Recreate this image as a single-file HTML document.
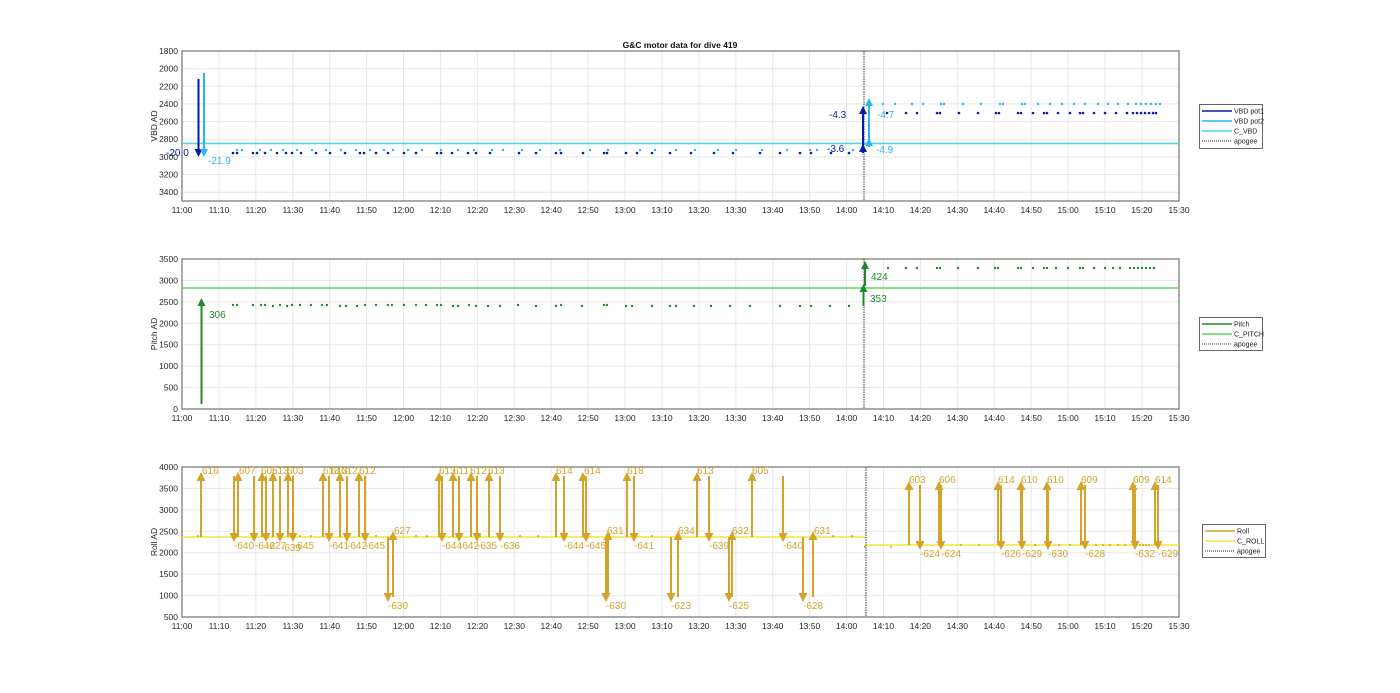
<!DOCTYPE html>
<html><head><meta charset="utf-8"><style>
html,body{margin:0;padding:0;background:#fff;}
svg{display:block;font-family:"Liberation Sans",sans-serif;}
.g{stroke:#e8e8e8;stroke-width:1;}
.ax{fill:none;stroke:#555;stroke-width:1;}
.tk{font-size:8.5px;fill:#262626;}
</style></head><body>
<svg width="1400" height="693" viewBox="0 0 1400 693" xmlns="http://www.w3.org/2000/svg">
<defs>
<marker id="hb" markerWidth="8" markerHeight="8" refX="6" refY="4" orient="auto" markerUnits="userSpaceOnUse" viewBox="0 0 8 8"><path d="M0,0 L8,4 L0,8z" fill="#0a1aa8"/></marker>
<marker id="hl" markerWidth="8" markerHeight="8" refX="6" refY="4" orient="auto" markerUnits="userSpaceOnUse" viewBox="0 0 8 8"><path d="M0,0 L8,4 L0,8z" fill="#2bb5ee"/></marker>
<marker id="hg" markerWidth="8" markerHeight="8" refX="6" refY="4" orient="auto" markerUnits="userSpaceOnUse" viewBox="0 0 8 8"><path d="M0,0 L8,4 L0,8z" fill="#1e8a2c"/></marker>
<marker id="hy" markerWidth="9" markerHeight="9" refX="7" refY="4.5" orient="auto" markerUnits="userSpaceOnUse" viewBox="0 0 9 9"><path d="M0,0 L9,4.5 L0,9z" fill="#d4a42a"/></marker>
</defs>

<text x="680" y="48" font-size="8.5" font-weight="bold" text-anchor="middle" fill="#111">G&amp;C motor data for dive 419</text>

<!-- ============ PANEL 1 ============ -->
<g class="g">
<path d="M218.9,51V201M255.8,51V201M292.8,51V201M329.7,51V201M366.6,51V201M403.5,51V201M440.4,51V201M477.4,51V201M514.3,51V201M551.2,51V201M588.1,51V201M625,51V201M662,51V201M698.9,51V201M735.8,51V201M772.7,51V201M809.6,51V201M846.6,51V201M883.5,51V201M920.4,51V201M957.3,51V201M994.2,51V201M1031.2,51V201M1068.1,51V201M1105,51V201M1141.9,51V201"/>
<path d="M182,68.6H1179M182,86.3H1179M182,103.9H1179M182,121.6H1179M182,139.2H1179M182,156.9H1179M182,174.5H1179M182,192.2H1179"/>
</g>
<rect class="ax" x="182" y="51" width="997" height="150"/>
<g class="tk" text-anchor="end">
<text x="178" y="54">1800</text><text x="178" y="71.6">2000</text><text x="178" y="89.3">2200</text><text x="178" y="106.9">2400</text><text x="178" y="124.6">2600</text><text x="178" y="142.2">2800</text><text x="178" y="159.9">3000</text><text x="178" y="177.5">3200</text><text x="178" y="195.2">3400</text>
</g>
<text transform="translate(157,126) rotate(-90)" font-size="8.5" text-anchor="middle" fill="#262626">VBD AD</text>
<g class="tk" text-anchor="middle">
<text x="182" y="213">11:00</text><text x="218.9" y="213">11:10</text><text x="255.8" y="213">11:20</text><text x="292.8" y="213">11:30</text><text x="329.7" y="213">11:40</text><text x="366.6" y="213">11:50</text><text x="403.5" y="213">12:00</text><text x="440.4" y="213">12:10</text><text x="477.4" y="213">12:20</text><text x="514.3" y="213">12:30</text><text x="551.2" y="213">12:40</text><text x="588.1" y="213">12:50</text><text x="625" y="213">13:00</text><text x="662" y="213">13:10</text><text x="698.9" y="213">13:20</text><text x="735.8" y="213">13:30</text><text x="772.7" y="213">13:40</text><text x="809.6" y="213">13:50</text><text x="846.6" y="213">14:00</text><text x="883.5" y="213">14:10</text><text x="920.4" y="213">14:20</text><text x="957.3" y="213">14:30</text><text x="994.2" y="213">14:40</text><text x="1031.2" y="213">14:50</text><text x="1068.1" y="213">15:00</text><text x="1105" y="213">15:10</text><text x="1141.9" y="213">15:20</text><text x="1179" y="213">15:30</text>
</g>
<line x1="182" y1="143.5" x2="1179" y2="143.5" stroke="#3fd8ea" stroke-width="1.5"/>
<line x1="864" y1="51" x2="864" y2="201" stroke="#333" stroke-width="1" stroke-dasharray="1.5,1"/>
<g fill="#2bb5ee">
<circle cx="237" cy="150" r="1.2"/><circle cx="242" cy="150" r="1.2"/><circle cx="260" cy="150" r="1.2"/><circle cx="271" cy="150" r="1.2"/><circle cx="283" cy="150" r="1.2"/><circle cx="297" cy="150" r="1.2"/><circle cx="312" cy="150" r="1.2"/><circle cx="326" cy="150" r="1.2"/><circle cx="341" cy="150" r="1.2"/><circle cx="356" cy="150" r="1.2"/><circle cx="370" cy="150" r="1.2"/><circle cx="384" cy="150" r="1.2"/><circle cx="393" cy="150" r="1.2"/><circle cx="408" cy="150" r="1.2"/><circle cx="422" cy="150" r="1.2"/><circle cx="441" cy="150" r="1.2"/><circle cx="458" cy="150" r="1.2"/><circle cx="474" cy="150" r="1.2"/><circle cx="492" cy="150" r="1.2"/><circle cx="503" cy="150" r="1.2"/><circle cx="522" cy="150" r="1.2"/><circle cx="540" cy="150" r="1.2"/><circle cx="560" cy="150" r="1.2"/><circle cx="590" cy="150" r="1.2"/><circle cx="608" cy="150" r="1.2"/><circle cx="640" cy="150" r="1.2"/><circle cx="655" cy="150" r="1.2"/><circle cx="676" cy="150" r="1.2"/><circle cx="695" cy="150" r="1.2"/><circle cx="718" cy="150" r="1.2"/><circle cx="736" cy="150" r="1.2"/><circle cx="762" cy="150" r="1.2"/><circle cx="787" cy="150" r="1.2"/><circle cx="810" cy="150" r="1.2"/><circle cx="817" cy="150" r="1.2"/><circle cx="853" cy="150" r="1.2"/>
<circle cx="883" cy="104" r="1.2"/><circle cx="895" cy="104" r="1.2"/><circle cx="912" cy="104" r="1.2"/><circle cx="923" cy="104" r="1.2"/><circle cx="941" cy="104" r="1.2"/><circle cx="944" cy="104" r="1.2"/><circle cx="963" cy="104" r="1.2"/><circle cx="981" cy="104" r="1.2"/><circle cx="1000" cy="104" r="1.2"/><circle cx="1003" cy="104" r="1.2"/><circle cx="1022" cy="104" r="1.2"/><circle cx="1025" cy="104" r="1.2"/><circle cx="1038" cy="104" r="1.2"/><circle cx="1050" cy="104" r="1.2"/><circle cx="1062" cy="104" r="1.2"/><circle cx="1074" cy="104" r="1.2"/><circle cx="1085" cy="104" r="1.2"/><circle cx="1098" cy="104" r="1.2"/><circle cx="1108" cy="104" r="1.2"/><circle cx="1118" cy="104" r="1.2"/><circle cx="1128" cy="104" r="1.2"/><circle cx="1136" cy="104" r="1.2"/><circle cx="1141" cy="104" r="1.2"/><circle cx="1146" cy="104" r="1.2"/><circle cx="1151" cy="104" r="1.2"/><circle cx="1156" cy="104" r="1.2"/><circle cx="1160" cy="104" r="1.2"/>
</g>
<g fill="#0a1aa8">
<circle cx="233" cy="153" r="1.3"/><circle cx="237" cy="153" r="1.3"/><circle cx="253" cy="153" r="1.3"/><circle cx="257" cy="153" r="1.3"/><circle cx="265" cy="153" r="1.3"/><circle cx="277" cy="153" r="1.3"/><circle cx="286" cy="153" r="1.3"/><circle cx="292" cy="153" r="1.3"/><circle cx="301" cy="153" r="1.3"/><circle cx="316" cy="153" r="1.3"/><circle cx="330" cy="153" r="1.3"/><circle cx="345" cy="153" r="1.3"/><circle cx="360" cy="153" r="1.3"/><circle cx="364" cy="153" r="1.3"/><circle cx="376" cy="153" r="1.3"/><circle cx="388" cy="153" r="1.3"/><circle cx="404" cy="153" r="1.3"/><circle cx="416" cy="153" r="1.3"/><circle cx="437" cy="153" r="1.3"/><circle cx="441" cy="153" r="1.3"/><circle cx="452" cy="153" r="1.3"/><circle cx="468" cy="153" r="1.3"/><circle cx="476" cy="153" r="1.3"/><circle cx="490" cy="153" r="1.3"/><circle cx="519" cy="153" r="1.3"/><circle cx="536" cy="153" r="1.3"/><circle cx="556" cy="153" r="1.3"/><circle cx="561" cy="153" r="1.3"/><circle cx="583" cy="153" r="1.3"/><circle cx="604" cy="153" r="1.3"/><circle cx="607" cy="153" r="1.3"/><circle cx="626" cy="153" r="1.3"/><circle cx="637" cy="153" r="1.3"/><circle cx="652" cy="153" r="1.3"/><circle cx="670" cy="153" r="1.3"/><circle cx="691" cy="153" r="1.3"/><circle cx="714" cy="153" r="1.3"/><circle cx="733" cy="153" r="1.3"/><circle cx="760" cy="153" r="1.3"/><circle cx="780" cy="153" r="1.3"/><circle cx="800" cy="153" r="1.3"/><circle cx="811" cy="153" r="1.3"/><circle cx="831" cy="153" r="1.3"/><circle cx="849" cy="153" r="1.3"/>
<circle cx="887" cy="113" r="1.3"/><circle cx="906" cy="113" r="1.3"/><circle cx="917" cy="113" r="1.3"/><circle cx="937" cy="113" r="1.3"/><circle cx="940" cy="113" r="1.3"/><circle cx="959" cy="113" r="1.3"/><circle cx="978" cy="113" r="1.3"/><circle cx="996" cy="113" r="1.3"/><circle cx="999" cy="113" r="1.3"/><circle cx="1018" cy="113" r="1.3"/><circle cx="1021" cy="113" r="1.3"/><circle cx="1033" cy="113" r="1.3"/><circle cx="1044" cy="113" r="1.3"/><circle cx="1047" cy="113" r="1.3"/><circle cx="1058" cy="113" r="1.3"/><circle cx="1070" cy="113" r="1.3"/><circle cx="1080" cy="113" r="1.3"/><circle cx="1083" cy="113" r="1.3"/><circle cx="1094" cy="113" r="1.3"/><circle cx="1105" cy="113" r="1.3"/><circle cx="1116" cy="113" r="1.3"/><circle cx="1127" cy="113" r="1.3"/><circle cx="1133" cy="113" r="1.3"/><circle cx="1137" cy="113" r="1.3"/><circle cx="1141" cy="113" r="1.3"/><circle cx="1145" cy="113" r="1.3"/><circle cx="1149" cy="113" r="1.3"/><circle cx="1153" cy="113" r="1.3"/><circle cx="1156" cy="113" r="1.3"/>
</g>
<line x1="198.5" y1="79" x2="198.5" y2="155" stroke="#0a1aa8" stroke-width="2" marker-end="url(#hb)"/>
<line x1="204" y1="73" x2="204" y2="155" stroke="#2bb5ee" stroke-width="2" marker-end="url(#hl)"/>
<text x="166" y="156" font-size="10" fill="#0a1aa8">-20.0</text>
<text x="208" y="164" font-size="10" fill="#2bb5ee">-21.9</text>
<line x1="863" y1="153" x2="863" y2="146" stroke="#0a1aa8" stroke-width="2" marker-end="url(#hb)"/>
<line x1="863" y1="146" x2="863" y2="108" stroke="#0a1aa8" stroke-width="2" marker-end="url(#hb)"/>
<line x1="869" y1="147" x2="869" y2="140" stroke="#2bb5ee" stroke-width="2" marker-end="url(#hl)"/>
<line x1="869" y1="140" x2="869" y2="100" stroke="#2bb5ee" stroke-width="2" marker-end="url(#hl)"/>
<text x="829" y="118" font-size="10" fill="#0a1aa8">-4.3</text>
<text x="827" y="152" font-size="10" fill="#0a1aa8">-3.6</text>
<text x="877" y="118" font-size="10" fill="#2bb5ee">-4.7</text>
<text x="876" y="153" font-size="10" fill="#2bb5ee">-4.9</text>
<rect x="1199.5" y="104.5" width="63" height="44" fill="#fff" stroke="#666"/>
<line x1="1202" y1="111" x2="1232" y2="111" stroke="#0a1aa8" stroke-width="1.5"/>
<line x1="1202" y1="121" x2="1232" y2="121" stroke="#2bb5ee" stroke-width="1.5"/>
<line x1="1202" y1="131" x2="1232" y2="131" stroke="#3fd8ea" stroke-width="1.5"/>
<line x1="1202" y1="141" x2="1232" y2="141" stroke="#333" stroke-dasharray="1,1"/>
<g font-size="7" fill="#222"><text x="1234" y="113.5">VBD pot1</text><text x="1234" y="123.5">VBD pot2</text><text x="1234" y="133.5">C_VBD</text><text x="1234" y="143.5">apogee</text></g>

<!-- ============ PANEL 2 ============ -->
<g class="g">
<path d="M218.9,259V409M255.8,259V409M292.8,259V409M329.7,259V409M366.6,259V409M403.5,259V409M440.4,259V409M477.4,259V409M514.3,259V409M551.2,259V409M588.1,259V409M625,259V409M662,259V409M698.9,259V409M735.8,259V409M772.7,259V409M809.6,259V409M846.6,259V409M883.5,259V409M920.4,259V409M957.3,259V409M994.2,259V409M1031.2,259V409M1068.1,259V409M1105,259V409M1141.9,259V409"/>
<path d="M182,280.4H1179M182,301.9H1179M182,323.3H1179M182,344.7H1179M182,366.1H1179M182,387.6H1179"/>
</g>
<rect class="ax" x="182" y="259" width="997" height="150"/>
<g class="tk" text-anchor="end">
<text x="178" y="262">3500</text><text x="178" y="283.4">3000</text><text x="178" y="304.9">2500</text><text x="178" y="326.3">2000</text><text x="178" y="347.7">1500</text><text x="178" y="369.1">1000</text><text x="178" y="390.6">500</text><text x="178" y="412">0</text>
</g>
<text transform="translate(157,334) rotate(-90)" font-size="8.5" text-anchor="middle" fill="#262626">Pitch AD</text>
<g class="tk" text-anchor="middle">
<text x="182" y="421">11:00</text><text x="218.9" y="421">11:10</text><text x="255.8" y="421">11:20</text><text x="292.8" y="421">11:30</text><text x="329.7" y="421">11:40</text><text x="366.6" y="421">11:50</text><text x="403.5" y="421">12:00</text><text x="440.4" y="421">12:10</text><text x="477.4" y="421">12:20</text><text x="514.3" y="421">12:30</text><text x="551.2" y="421">12:40</text><text x="588.1" y="421">12:50</text><text x="625" y="421">13:00</text><text x="662" y="421">13:10</text><text x="698.9" y="421">13:20</text><text x="735.8" y="421">13:30</text><text x="772.7" y="421">13:40</text><text x="809.6" y="421">13:50</text><text x="846.6" y="421">14:00</text><text x="883.5" y="421">14:10</text><text x="920.4" y="421">14:20</text><text x="957.3" y="421">14:30</text><text x="994.2" y="421">14:40</text><text x="1031.2" y="421">14:50</text><text x="1068.1" y="421">15:00</text><text x="1105" y="421">15:10</text><text x="1141.9" y="421">15:20</text><text x="1179" y="421">15:30</text>
</g>
<line x1="182" y1="288" x2="1179" y2="288" stroke="#5fd35f" stroke-width="1.5"/>
<line x1="864" y1="259" x2="864" y2="409" stroke="#333" stroke-width="1" stroke-dasharray="1.5,1"/>
<g fill="#1e8a2c">
<circle cx="233" cy="305" r="1.2"/><circle cx="237" cy="305" r="1.2"/><circle cx="253" cy="305" r="1.2"/><circle cx="261" cy="305" r="1.2"/><circle cx="265" cy="305" r="1.2"/><circle cx="273" cy="306" r="1.2"/><circle cx="280" cy="305" r="1.2"/><circle cx="287" cy="306" r="1.2"/><circle cx="292" cy="305" r="1.2"/><circle cx="300" cy="305" r="1.2"/><circle cx="311" cy="305" r="1.2"/><circle cx="322" cy="305" r="1.2"/><circle cx="327" cy="305" r="1.2"/><circle cx="340" cy="306" r="1.2"/><circle cx="346" cy="306" r="1.2"/><circle cx="357" cy="306" r="1.2"/><circle cx="365" cy="305" r="1.2"/><circle cx="376" cy="305" r="1.2"/><circle cx="388" cy="305" r="1.2"/><circle cx="392" cy="305" r="1.2"/><circle cx="404" cy="305" r="1.2"/><circle cx="416" cy="305" r="1.2"/><circle cx="426" cy="305" r="1.2"/><circle cx="437" cy="305" r="1.2"/><circle cx="441" cy="305" r="1.2"/><circle cx="453" cy="306" r="1.2"/><circle cx="458" cy="306" r="1.2"/><circle cx="469" cy="305" r="1.2"/><circle cx="476" cy="306" r="1.2"/><circle cx="488" cy="306" r="1.2"/><circle cx="500" cy="306" r="1.2"/><circle cx="518" cy="305" r="1.2"/><circle cx="536" cy="306" r="1.2"/><circle cx="556" cy="306" r="1.2"/><circle cx="561" cy="305" r="1.2"/><circle cx="582" cy="306" r="1.2"/><circle cx="604" cy="305" r="1.2"/><circle cx="607" cy="305" r="1.2"/><circle cx="626" cy="306" r="1.2"/><circle cx="632" cy="306" r="1.2"/><circle cx="652" cy="306" r="1.2"/><circle cx="670" cy="306" r="1.2"/><circle cx="676" cy="306" r="1.2"/><circle cx="694" cy="306" r="1.2"/><circle cx="711" cy="306" r="1.2"/><circle cx="730" cy="306" r="1.2"/><circle cx="750" cy="306" r="1.2"/><circle cx="780" cy="306" r="1.2"/><circle cx="800" cy="306" r="1.2"/><circle cx="811" cy="306" r="1.2"/><circle cx="830" cy="306" r="1.2"/><circle cx="849" cy="306" r="1.2"/>
<circle cx="888" cy="268" r="1.2"/><circle cx="906" cy="268" r="1.2"/><circle cx="917" cy="268" r="1.2"/><circle cx="937" cy="268" r="1.2"/><circle cx="940" cy="268" r="1.2"/><circle cx="958" cy="268" r="1.2"/><circle cx="978" cy="268" r="1.2"/><circle cx="995" cy="268" r="1.2"/><circle cx="998" cy="268" r="1.2"/><circle cx="1018" cy="268" r="1.2"/><circle cx="1021" cy="268" r="1.2"/><circle cx="1033" cy="268" r="1.2"/><circle cx="1044" cy="268" r="1.2"/><circle cx="1047" cy="268" r="1.2"/><circle cx="1056" cy="268" r="1.2"/><circle cx="1068" cy="268" r="1.2"/><circle cx="1080" cy="268" r="1.2"/><circle cx="1083" cy="268" r="1.2"/><circle cx="1094" cy="268" r="1.2"/><circle cx="1105" cy="268" r="1.2"/><circle cx="1113" cy="268" r="1.2"/><circle cx="1120" cy="268" r="1.2"/><circle cx="1130" cy="268" r="1.2"/><circle cx="1134" cy="268" r="1.2"/><circle cx="1138" cy="268" r="1.2"/><circle cx="1142" cy="268" r="1.2"/><circle cx="1146" cy="268" r="1.2"/><circle cx="1150" cy="268" r="1.2"/><circle cx="1154" cy="268" r="1.2"/>
</g>
<line x1="201.5" y1="404" x2="201.5" y2="300" stroke="#1e8a2c" stroke-width="2" marker-end="url(#hg)"/>
<text x="209" y="318" font-size="10" fill="#1e8a2c">306</text>
<line x1="863.5" y1="306" x2="863.5" y2="286" stroke="#1e8a2c" stroke-width="2" marker-end="url(#hg)"/>
<line x1="865" y1="286" x2="865" y2="263" stroke="#1e8a2c" stroke-width="2" marker-end="url(#hg)"/>
<text x="871" y="280" font-size="10" fill="#1e8a2c">424</text>
<text x="870" y="302" font-size="10" fill="#1e8a2c">353</text>
<rect x="1199.5" y="317.5" width="63" height="33" fill="#fff" stroke="#666"/>
<line x1="1202" y1="324" x2="1232" y2="324" stroke="#1e8a2c" stroke-width="1.5"/>
<line x1="1202" y1="334" x2="1232" y2="334" stroke="#5fd35f" stroke-width="1.5"/>
<line x1="1202" y1="344" x2="1232" y2="344" stroke="#333" stroke-dasharray="1,1"/>
<g font-size="7" fill="#222"><text x="1234" y="326.5">Pitch</text><text x="1234" y="336.5">C_PITCH</text><text x="1234" y="346.5">apogee</text></g>

<!-- ============ PANEL 3 ============ -->
<g class="g">
<path d="M218.9,467V617M255.8,467V617M292.8,467V617M329.7,467V617M366.6,467V617M403.5,467V617M440.4,467V617M477.4,467V617M514.3,467V617M551.2,467V617M588.1,467V617M625,467V617M662,467V617M698.9,467V617M735.8,467V617M772.7,467V617M809.6,467V617M846.6,467V617M883.5,467V617M920.4,467V617M957.3,467V617M994.2,467V617M1031.2,467V617M1068.1,467V617M1105,467V617M1141.9,467V617"/>
<path d="M182,488.4H1179M182,509.9H1179M182,531.3H1179M182,552.7H1179M182,574.1H1179M182,595.6H1179"/>
</g>
<rect class="ax" x="182" y="467" width="997" height="150"/>
<g class="tk" text-anchor="end">
<text x="178" y="470">4000</text><text x="178" y="491.4">3500</text><text x="178" y="512.9">3000</text><text x="178" y="534.3">2500</text><text x="178" y="555.7">2000</text><text x="178" y="577.1">1500</text><text x="178" y="598.6">1000</text><text x="178" y="620">500</text>
</g>
<text transform="translate(157,542) rotate(-90)" font-size="8.5" text-anchor="middle" fill="#262626">Roll AD</text>
<g class="tk" text-anchor="middle">
<text x="182" y="629">11:00</text><text x="218.9" y="629">11:10</text><text x="255.8" y="629">11:20</text><text x="292.8" y="629">11:30</text><text x="329.7" y="629">11:40</text><text x="366.6" y="629">11:50</text><text x="403.5" y="629">12:00</text><text x="440.4" y="629">12:10</text><text x="477.4" y="629">12:20</text><text x="514.3" y="629">12:30</text><text x="551.2" y="629">12:40</text><text x="588.1" y="629">12:50</text><text x="625" y="629">13:00</text><text x="662" y="629">13:10</text><text x="698.9" y="629">13:20</text><text x="735.8" y="629">13:30</text><text x="772.7" y="629">13:40</text><text x="809.6" y="629">13:50</text><text x="846.6" y="629">14:00</text><text x="883.5" y="629">14:10</text><text x="920.4" y="629">14:20</text><text x="957.3" y="629">14:30</text><text x="994.2" y="629">14:40</text><text x="1031.2" y="629">14:50</text><text x="1068.1" y="629">15:00</text><text x="1105" y="629">15:10</text><text x="1141.9" y="629">15:20</text><text x="1179" y="629">15:30</text>
</g>
<line x1="182" y1="537" x2="866" y2="537" stroke="#f2e63a" stroke-width="1.5"/>
<line x1="866" y1="545" x2="1179" y2="545" stroke="#f2e63a" stroke-width="1.5"/>
<line x1="866" y1="467" x2="866" y2="617" stroke="#333" stroke-width="1" stroke-dasharray="1.5,1"/>
<g fill="#d4a42a">
<circle cx="198" cy="536" r="1"/><circle cx="300" cy="536" r="1"/><circle cx="311" cy="536" r="1"/><circle cx="376" cy="536" r="1"/><circle cx="416" cy="536" r="1"/><circle cx="427" cy="536" r="1"/><circle cx="480" cy="536" r="1"/><circle cx="520" cy="536" r="1"/><circle cx="538" cy="536" r="1"/><circle cx="652" cy="536" r="1"/><circle cx="833" cy="536" r="1"/><circle cx="852" cy="536" r="1"/><circle cx="865" cy="547" r="1.2"/><circle cx="891" cy="547" r="1"/><circle cx="961" cy="545" r="1"/><circle cx="979" cy="545" r="1"/><circle cx="1035" cy="545" r="1"/><circle cx="1059" cy="545" r="1"/><circle cx="1070" cy="545" r="1"/><circle cx="1096" cy="545" r="1"/><circle cx="1103" cy="545" r="1"/><circle cx="1110" cy="545" r="1"/><circle cx="1118" cy="545" r="1"/><circle cx="1125" cy="545" r="1"/><circle cx="1140" cy="545" r="1"/><circle cx="1143" cy="545" r="1"/><circle cx="1146" cy="545" r="1"/><circle cx="1149" cy="545" r="1"/>
</g>
<g stroke="#d4a42a" stroke-width="2" marker-end="url(#hy)">
<line x1="201" y1="537" x2="201" y2="474"/><line x1="238" y1="537" x2="238" y2="474"/><line x1="262" y1="537" x2="262" y2="474"/><line x1="273" y1="537" x2="273" y2="474"/><line x1="288" y1="537" x2="288" y2="474"/>
<line x1="323" y1="537" x2="323" y2="474"/><line x1="340" y1="537" x2="340" y2="474"/><line x1="359" y1="537" x2="359" y2="474"/>
<line x1="393" y1="597" x2="393" y2="533"/>
<line x1="439" y1="537" x2="439" y2="474"/><line x1="453" y1="537" x2="453" y2="474"/><line x1="471" y1="537" x2="471" y2="474"/><line x1="489" y1="537" x2="489" y2="474"/>
<line x1="556" y1="537" x2="556" y2="474"/><line x1="583" y1="537" x2="583" y2="474"/><line x1="608" y1="597" x2="608" y2="533"/><line x1="627" y1="537" x2="627" y2="474"/>
<line x1="678" y1="597" x2="678" y2="533"/><line x1="697" y1="537" x2="697" y2="474"/><line x1="732" y1="597" x2="732" y2="533"/><line x1="752" y1="537" x2="752" y2="474"/><line x1="813" y1="597" x2="813" y2="533"/>
<line x1="909" y1="545" x2="909" y2="483"/><line x1="939" y1="545" x2="939" y2="483"/><line x1="998" y1="545" x2="998" y2="483"/><line x1="1021" y1="545" x2="1021" y2="483"/><line x1="1047" y1="545" x2="1047" y2="483"/><line x1="1081" y1="545" x2="1081" y2="483"/><line x1="1133" y1="545" x2="1133" y2="483"/><line x1="1155" y1="545" x2="1155" y2="483"/>
<line x1="234" y1="476" x2="234" y2="540"/><line x1="254" y1="476" x2="254" y2="540"/><line x1="266" y1="476" x2="266" y2="540"/><line x1="280" y1="476" x2="280" y2="540"/><line x1="293" y1="476" x2="293" y2="540"/>
<line x1="329" y1="476" x2="329" y2="540"/><line x1="347" y1="476" x2="347" y2="540"/><line x1="365" y1="476" x2="365" y2="540"/>
<line x1="388" y1="537" x2="388" y2="600"/>
<line x1="442" y1="476" x2="442" y2="540"/><line x1="459" y1="476" x2="459" y2="540"/><line x1="477" y1="476" x2="477" y2="540"/><line x1="500" y1="476" x2="500" y2="540"/>
<line x1="564" y1="476" x2="564" y2="540"/><line x1="586" y1="476" x2="586" y2="540"/><line x1="606" y1="537" x2="606" y2="600"/><line x1="634" y1="476" x2="634" y2="540"/>
<line x1="671" y1="537" x2="671" y2="600"/><line x1="709" y1="476" x2="709" y2="540"/><line x1="729" y1="537" x2="729" y2="600"/><line x1="783" y1="476" x2="783" y2="540"/><line x1="803" y1="537" x2="803" y2="600"/>
<line x1="920" y1="485" x2="920" y2="548"/><line x1="941" y1="485" x2="941" y2="548"/><line x1="1001" y1="485" x2="1001" y2="548"/><line x1="1022" y1="485" x2="1022" y2="548"/><line x1="1048" y1="485" x2="1048" y2="548"/><line x1="1085" y1="485" x2="1085" y2="548"/><line x1="1135" y1="485" x2="1135" y2="548"/><line x1="1158" y1="485" x2="1158" y2="548"/>
</g>
<g font-size="10" fill="#d4a42a">
<text x="202" y="474">616</text><text x="239" y="474">607</text><text x="261" y="474">605</text><text x="272" y="474">613</text><text x="287" y="474">603</text>
<text x="323" y="474">613</text><text x="331" y="474">613</text><text x="341" y="474">612</text><text x="359" y="474">612</text>
<text x="394" y="534">627</text>
<text x="439" y="474">613</text><text x="453" y="474">611</text><text x="470" y="474">612</text><text x="488" y="474">613</text>
<text x="556" y="474">614</text><text x="584" y="474">614</text><text x="607" y="534">631</text><text x="627" y="474">618</text>
<text x="678" y="534">634</text><text x="697" y="474">613</text><text x="732" y="534">632</text><text x="752" y="474">605</text><text x="814" y="534">631</text>
<text x="909" y="483">603</text><text x="939" y="483">606</text><text x="998" y="483">614</text><text x="1021" y="483">610</text><text x="1047" y="483">610</text><text x="1081" y="483">609</text><text x="1133" y="483">609</text><text x="1155" y="483">614</text>
<text x="234" y="549">-640</text><text x="255" y="549">-642</text><text x="266" y="549">-627</text><text x="281" y="551">-639</text><text x="294" y="549">-645</text>
<text x="329" y="549">-641</text><text x="347" y="549">-642</text><text x="365" y="549">-645</text>
<text x="388" y="609">-630</text>
<text x="442" y="549">-644</text><text x="459" y="549">-642</text><text x="477" y="549">-635</text><text x="500" y="549">-636</text>
<text x="564" y="549">-644</text><text x="586" y="549">-645</text><text x="606" y="609">-630</text><text x="634" y="549">-641</text>
<text x="671" y="609">-623</text><text x="709" y="549">-639</text><text x="729" y="609">-625</text><text x="783" y="549">-640</text><text x="803" y="609">-628</text>
<text x="920" y="557">-624</text><text x="941" y="557">-624</text><text x="1001" y="557">-626</text><text x="1022" y="557">-629</text><text x="1048" y="557">-630</text><text x="1085" y="557">-628</text><text x="1135" y="557">-632</text><text x="1158" y="557">-629</text>
</g>
<rect x="1202.5" y="524.5" width="63" height="33" fill="#fff" stroke="#666"/>
<line x1="1205" y1="531" x2="1235" y2="531" stroke="#d4a42a" stroke-width="1.5"/>
<line x1="1205" y1="541" x2="1235" y2="541" stroke="#f2e63a" stroke-width="1.5"/>
<line x1="1205" y1="551" x2="1235" y2="551" stroke="#333" stroke-dasharray="1,1"/>
<g font-size="7" fill="#222"><text x="1237" y="533.5">Roll</text><text x="1237" y="543.5">C_ROLL</text><text x="1237" y="553.5">apogee</text></g>
</svg>
</body></html>
